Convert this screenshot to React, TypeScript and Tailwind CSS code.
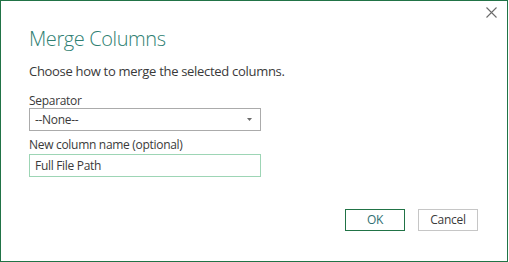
export default function App() {
  return (
    <div className="w-[509px] h-[262px] bg-white" style={{ fontFamily: '"Open Sans", "Noto Sans", sans-serif' }}>
      <div className="relative w-[508px] h-[262px] border border-[#217346] bg-white flex flex-col">
        {/* Close button */}
        <button className="absolute right-[10px] top-[6px] w-[11px] h-[11px] flex items-center justify-center">
          <svg width="11" height="11" viewBox="0 0 11 11" fill="none">
            <path d="M0.5 0.5 L10.5 10.5 M10.5 0.5 L0.5 10.5" stroke="#6b6b6b" strokeWidth="1.1" />
          </svg>
        </button>

        <div className="pl-[28px] pr-[246px] pt-[24px]">
          <h1 className="text-[20px] leading-[28px] font-light text-[#2f7f72] tracking-[-0.4px]">Merge Columns</h1>
          <p className="mt-[9px] text-[13px] leading-[18px] text-[#3a3a3a] tracking-[-0.3px] whitespace-nowrap">
            Choose how to merge the selected columns.
          </p>

          <label className="block mt-[14px] text-[12px] leading-[14px] text-[#3a3a3a] tracking-[-0.3px]">Separator</label>
          <div className="h-[23px] border border-[#ababab] flex items-center justify-between pl-[5px] pr-[8px]">
            <span className="text-[12px] text-[#3a3a3a] tracking-[-0.3px]">--None--</span>
            <svg width="5" height="3" viewBox="0 0 5 3">
              <path d="M0 0 H5 L2.5 3 Z" fill="#6b6b6b" />
            </svg>
          </div>

          <label className="block mt-[7px] text-[12px] leading-[14px] text-[#3a3a3a] tracking-[-0.3px]">New column name (optional)</label>
          <div className="mt-[2px] h-[23px] border border-[#9dd5b5] flex items-center pl-[5px]">
            <span className="text-[12px] text-[#3a3a3a] tracking-[-0.3px]">Full File Path</span>
          </div>
        </div>

        <div className="flex justify-end gap-[13px] pr-[29px] mt-[32px]">
          <button className="w-[60px] h-[22px] border border-[#217346] text-[12px] text-[#2f6f72] tracking-[-0.3px]">OK</button>
          <button className="w-[60px] h-[22px] border border-[#c6c6c6] text-[12px] text-[#3a3a3a] tracking-[-0.3px]">Cancel</button>
        </div>
      </div>
    </div>
  );
}
